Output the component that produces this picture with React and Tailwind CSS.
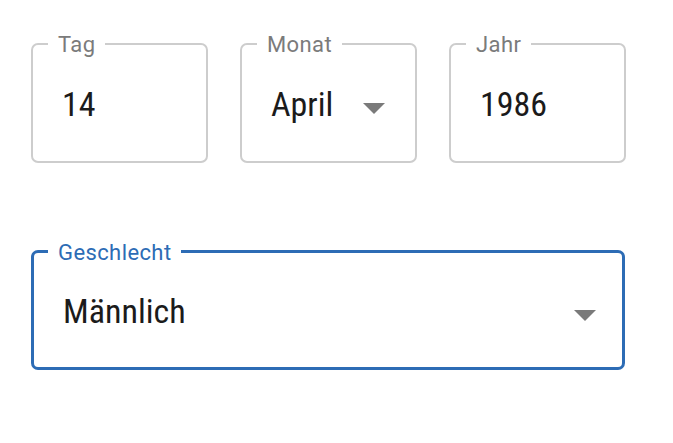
import React from "react";

const Arrow = ({ className = "" }) => (
  <svg viewBox="0 0 22 11" className={"w-[22px] h-[11px] " + className}>
    <polygon points="0,0 22,0 11,11" fill="#7a7a7a" />
  </svg>
);

const Field = ({ label, value, select, focused, className = "" }) => {
  return (
    <div
      className={
        "relative h-[120px] rounded-[7px] flex items-center pl-[29px] pt-[2px] " +
        (focused ? "border-[3px] border-[#2d6cb5]" : "border-2 border-[#cdcdcd]") +
        " " +
        className
      }
    >
      <span
        className={
          "absolute top-0 -translate-y-1/2 bg-white px-[10px] text-[22px] tracking-[0.4px] leading-none " +
          (focused ? "left-[14px] text-[#2d6cb5]" : "left-[15px] text-[#7b7b7b]")
        }
      >
        {label}
      </span>
      <span className="text-[34px] leading-none font-stretch-[86%] text-[#1b1b1b]">{value}</span>
      {select && <Arrow className={"ml-auto mt-[8px] " + (focused ? "mr-[26px]" : "mr-[30px]")} />}
    </div>
  );
};

export default function App() {
  return (
    <div
      className="min-h-screen bg-white pl-[31px] pt-[43px]"
      style={{ fontFamily: "Roboto, 'Noto Sans', sans-serif" }}
    >
      <div className="flex gap-[32px]">
        <Field label="Tag" value="14" className="w-[177px]" />
        <Field label="Monat" value="April" select className="w-[177px]" />
        <Field label="Jahr" value="1986" className="w-[177px]" />
      </div>
      <div className="mt-[87px]">
        <Field label="Geschlecht" value="Männlich" select focused className="w-[594px]" />
      </div>
    </div>
  );
}
